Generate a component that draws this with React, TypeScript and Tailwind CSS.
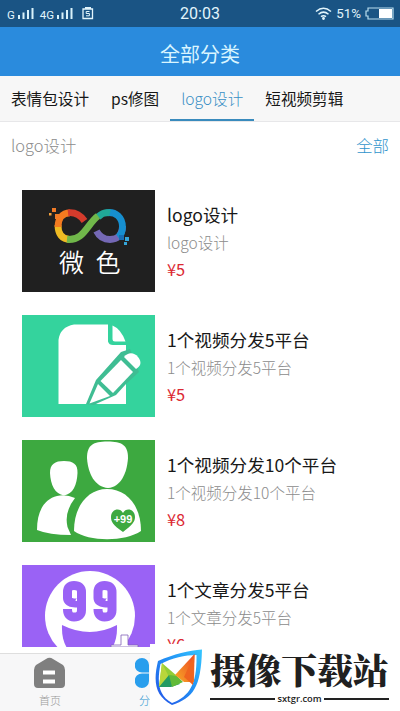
interface Service {
  id: number;
  title: string;
  price: string;
  Cover: () => React.JSX.Element;
}

const LogoCover = () => (
  <svg viewBox="0 0 133 102" className="block h-full w-full">
    <rect width="133" height="102" fill="#202020" />
    <g fill="none" strokeWidth="6.8">
      <path d="M100.500 36C100.500 45 95 49.500 88 49.500C82 49.500 77.500 47 74.500 41" stroke="#7468b5" />
      <path d="M84 22.800C94 21 100.500 28 100.500 37C100.500 41 99 45 96 47" stroke="#168fd0" />
      <path d="M76 27C80 23 84 22 88 22.800" stroke="#20a997" />
      <path d="M36 35C36 44 40 49.500 48 49.500" stroke="#efbb23" />
      <path d="M45 49.400C62 51 65 34 76 26" stroke="#70b74a" />
      <path d="M48 22.800C40 22.800 36 29 36 37" stroke="#f47b20" />
      <path d="M62.500 31C58 24.500 53 22 46 22.800" stroke="#d43b2c" />
    </g>
    <path d="M30 18h4v4h-4zM33 24h5v5h-5z" fill="#f07b27" />
    <path d="M27 23h2.500v2.500H27z" fill="#f5a13b" />
    <path d="M97 45h5v5h-5z" fill="#176eb5" />
    <path d="M103 47h4v4h-4zM102 52h3v3h-3z" fill="#34a5d9" />
    <text x="37" y="81.500" fill="white" fontSize="25" fontWeight="350">微</text>
    <text x="73.500" y="81.500" fill="white" fontSize="25" fontWeight="350">色</text>
  </svg>
);

const NoteCover = () => (
  <svg viewBox="0 0 133 102" className="block h-full w-full">
    <rect width="133" height="102" fill="#34d39d" />
    <path d="M52 9.500H86V26.500Q87 30 91 30H104V89H36.500V25Q38 12 52 9.500Z" fill="white" />
    <path d="M90.500 10.500Q99 14 103.500 26.500H93Q90.500 26.500 90.500 24Z" fill="white" />
    <path d="M64 89L74 65L99 37L108 34L117 57L104 69L94 80L76 88L72 90Z" fill="#3fbd93" />
    <path d="M78.500 66L99 45L111 57L91 78Z" fill="white" />
    <path d="M102 42C106 37 112 37 116 42C120 47 119 51 114 54Z" fill="white" />
    <path d="M76 69L88 81L67.500 88.500Z" fill="white" />
  </svg>
);

const FriendsCover = () => (
  <svg viewBox="0 0 133 102" className="block h-full w-full">
    <rect width="133" height="102" fill="#3da940" />
    <path d="M28 33C28 24 33 21 42 21C51 21 56 24 55.500 33C55 45 51 54 42 55.500C33 54 28.500 45 28 33Z" fill="white" />
    <path d="M15 90C15 70 23 59 35 56Q44 54 53 58Q42 72 45.500 87L49 95Q27 95 15 90Z" fill="white" />
    <path d="M65 18C65 5 71 1.500 85.500 1.500C100 1.500 106 5 106 18C105 33 99 47 86 48C73 47 66 34 65 18Z" fill="white" />
    <path d="M52 91C52 66 66 49 85 49C105 49 119 66 119 91C103 102 67 102 52 91Z" fill="white" />
    <path d="M101 92C91 85 89 82 89 77C89 69 98 67 101 73C104 67 113 69 113 77C113 82 110 85 101 92Z" fill="#3da940" />
    <text x="101" y="83" textAnchor="middle" fill="white" fontSize="11" fontWeight="700" className="font-['Liberation_Sans',sans-serif]">+99</text>
  </svg>
);

const SmileCover = () => (
  <svg viewBox="0 0 133 102" className="block h-full w-full">
    <rect width="133" height="102" fill="#9a62f5" />
    <circle cx="68" cy="51" r="45" fill="white" />
    <g fill="none" stroke="#9a62f5" strokeWidth="9">
      <path d="M58 36C58 39 45.500 39 45.500 33V27Q45.500 20.500 52 20.500Q59.500 20.500 59.500 27V45Q59.500 52 52 52Q45.500 52 45.500 44" />
      <path d="M88 36C88 39 76 39 76 33V27Q76 20.500 82.500 20.500Q90 20.500 90 27V45Q90 52 82.500 52Q76 52 76 44" />
    </g>
    <path d="M40 60Q68 74 95 60C96 83 84 95 68 95C51 95 39 83 40 60Z" fill="#9a62f5" />
    <path d="M89 82V80H99V70H106V80H116V82Z" fill="white" stroke="#8060b8" strokeWidth="0.800" />
  </svg>
);

const services: Service[] = [
  { id: 1, title: 'logo设计', price: '¥5', Cover: LogoCover },
  { id: 2, title: '1个视频分发5平台', price: '¥5', Cover: NoteCover },
  { id: 3, title: '1个视频分发10个平台', price: '¥8', Cover: FriendsCover },
  { id: 4, title: '1个文章分发5平台', price: '¥6', Cover: SmileCover },
];

const tabs = ['表情包设计', 'ps修图', 'logo设计', '短视频剪辑'];

const SignalBars = () => (
  <svg width="17" height="13" viewBox="0 0 17 13" fill="#d8f1fa">
    <path d="M0 8h2v4H0zM4.500 5.500h2V12h-2zM9 3h2v9H9zM13.500 1h2v11h-2z" />
  </svg>
);

const StatusBar = () => (
  <div className="relative flex h-[27px] shrink-0 items-center justify-between bg-[#1a5484] pr-[6px] pl-[7px] text-[#e2f5fc]">
    <div className="flex items-center font-['Roboto',sans-serif]">
      <span className="mr-[3px] mt-1 text-[11.500px] leading-none">G</span>
      <SignalBars />
      <span className="mr-[3px] ml-[5px] mt-1 text-[11.500px] leading-none">4G</span>
      <SignalBars />
      <svg width="12" height="13" viewBox="0 0 12 13" className="ml-[8px]" fill="none" stroke="currentColor">
        <path d="M1 2h9.500v9.500H1zM3 .5h6" strokeWidth="1.300" />
        <path d="M7.500 4.500H4.200v2h3.200v2.300H4" />
      </svg>
    </div>
    <span className="absolute top-[4px] left-1/2 -translate-x-1/2 font-['Roboto',sans-serif] text-[16px] leading-[20px]">20:03</span>
    <div className="flex items-center">
      <svg width="17" height="13" viewBox="0 0 17 13" fill="none" stroke="currentColor" strokeWidth="1.500">
        <path d="M1 4.500Q8.500-2 16 4.500M3.500 7.200Q8.500 3 13.500 7.200M6 9.700Q8.500 7.700 11 9.700" />
        <circle cx="8.500" cy="11.500" r="0.700" fill="currentColor" />
      </svg>
      <span className="ml-1 font-['Roboto',sans-serif] text-[13.300px] leading-none">51%</span>
      <svg width="29" height="13" viewBox="0 0 29 13" className="ml-[4px]">
        <path d="M3 1H28V12H3V9H1V4H3Z" fill="none" stroke="#b8dced" strokeWidth="1.200" />
        <path d="M14 2h13v9H14z" fill="white" />
      </svg>
    </div>
  </div>
);

const SiteBadge = () => (
  <div className="absolute top-[644px] left-[150px] flex h-[67px] w-[250px] bg-white pl-1">
    <svg width="50" height="67" viewBox="4 0 50 67" className="shrink-0">
      <defs>
        <linearGradient id="shield" x1="1" y1="0" x2="0" y2="1">
          <stop offset="0" stopColor="#35c7ff" />
          <stop offset="0.450" stopColor="#2292f5" />
          <stop offset="1" stopColor="#2450e7" />
        </linearGradient>
        <linearGradient id="peak" x1="0" y1="1" x2="1" y2="0">
          <stop offset="0" stopColor="#f7ab25" />
          <stop offset="1" stopColor="#ed4526" />
        </linearGradient>
      </defs>
      <path d="M52 5.500C39 6.500 24 10 8 17C3 38 5 52 22 61C43 54 51 44 52 5.500ZM46.500 11C47 38 41 52 22 59C8 51 7 38 10.500 20C22 14 35 11 46.500 11Z" fill="url(#shield)" fillRule="evenodd" />
      <path d="M12 19L27 32L20 43L9 43Z" fill="#94cd35" />
      <path d="M12 19L19 33L9 43Z" fill="#b9d63b" />
      <path d="M9 43L19 31L30 40L21 43Z" fill="#249b63" />
      <path d="M19 31L27 32L33 38L22 43Z" fill="#62ba38" />
      <path d="M44.500 10L25 31L34 38L44 38Z" fill="url(#peak)" />
      <path d="M44.500 10L34 33L43 41Z" fill="#ef641f" />
    </svg>
    <div className="ml-[6px] w-[179px] pt-[4px]">
      <div className="h-[42px] whitespace-nowrap font-['Noto_Serif_CJK_SC','Noto_Sans_CJK_SC',serif] text-[35.700px] leading-[42px] font-black text-[#202020]">摄像下载站</div>
      <div className="mt-[2px] flex items-center">
        <span className="h-[2px] flex-1 bg-[#222]" />
        <span className="px-[2px] font-['Open_Sans',sans-serif] text-[9.300px] leading-[13px] font-semibold text-[#222]">sxtgr.com</span>
        <span className="h-[2px] flex-1 bg-[#222]" />
      </div>
    </div>
  </div>
);

export default function App() {
  return (
    <div className="relative flex h-[711px] w-[400px] flex-col overflow-hidden bg-white font-['Noto_Sans_CJK_SC',sans-serif]">
      <StatusBar />

      {/* Header */}
      <header className="flex h-[49px] shrink-0 items-center justify-center bg-[#2a8bdd] pt-1 text-[20px] text-[#d9f5ff]">
        全部分类
      </header>

      {/* Category tabs */}
      <nav className="flex h-[46px] shrink-0 border-b border-[#e7e7e9] bg-[#f7f7f7] text-[15.600px] text-[#171717]">
        {tabs.map((tab) => (
          <button
            key={tab}
            className={`flex items-center whitespace-nowrap px-[11px] ${
              tab === 'logo设计' ? 'border-b-2 border-[#398bbd] pt-[3px] font-light text-[#398fc5]' : 'pt-px'
            }`}
          >
            {tab}
          </button>
        ))}
      </nav>

      <div className="flex h-[46px] shrink-0 items-center justify-between px-[11px] text-[16.400px] font-light">
        <span className="text-[#8c8c8c]">logo设计</span>
        <span className="text-[#2f94cc]">全部</span>
      </div>

      {/* Service list */}
      <main className="h-[479px] shrink-0 overflow-hidden pt-[22px]">
        {services.map(({ id, title, price, Cover }) => (
          <div key={id} className="mb-[23px] flex h-[102px] pl-[22px]">
            <div className="w-[133px] shrink-0">
              <Cover />
            </div>
            <div className="ml-3 pt-[11px] leading-[27.500px] whitespace-nowrap">
              <div className="text-[17.600px] text-[#181818]">{title}</div>
              <div className="text-[15.500px] font-light text-[#8c8c8c]">{title}</div>
              <div className="text-[16.400px] text-[#db2832]">{price}</div>
            </div>
          </div>
        ))}
      </main>

      {/* Bottom navigation */}
      <footer className="mt-[6px] flex h-[58px] shrink-0 border-t border-[#dedede] bg-[#f7f7f8] text-[11px] font-light">
        <div className="flex w-[100px] flex-col items-center pt-[3px] text-[#999]">
          <svg width="32" height="32" viewBox="0 0 32 32" className="ml-[-1px]">
            <path d="M12 2Q15.500-.5 19 2L29 8Q31 10 31 13V27Q31 31 27 31H4Q0 31 0 27V13Q0 10 2 8Z" fill="#7f7f7f" />
            <path d="M9 13.500h12v4H9zM9 22.500h12v4H9z" fill="white" />
          </svg>
          <span className="mt-[3px] leading-4">首页</span>
        </div>
        <div className="flex w-[100px] flex-col items-center pt-[4px] text-[#2994d0]">
          <svg width="30" height="30" viewBox="0 0 30 30" fill="#299eed">
            <path d="M7 0A7 7 0 0 0 7 14.500H14V7A7 7 0 0 0 7 0ZM7 15.500A7 7 0 0 0 7 30A7 7 0 0 0 14 23V15.500Z" />
            <path d="M23 0A7 7 0 0 1 23 14.500H16V7A7 7 0 0 1 23 0ZM23 15.500A7 7 0 0 1 23 30A7 7 0 0 1 16 23V15.500Z" />
          </svg>
          <span className="mt-[4px] leading-4">分类</span>
        </div>
      </footer>

      <SiteBadge />
    </div>
  );
}
